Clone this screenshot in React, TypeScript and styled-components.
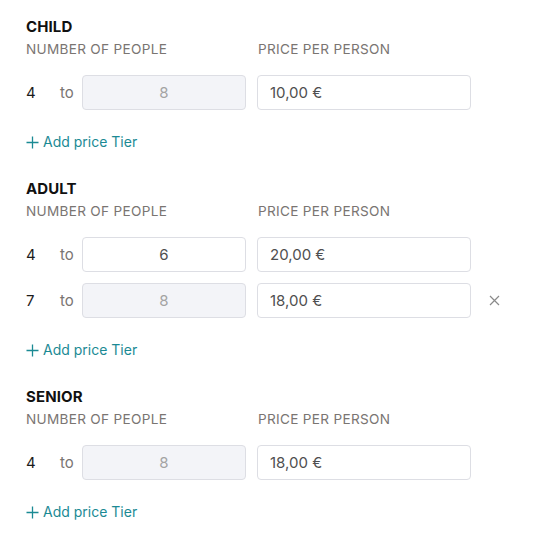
import React from "react";
import styled, { createGlobalStyle } from "styled-components";

const Global = createGlobalStyle`
  html, body { margin: 0; padding: 0; background: #ffffff; }
  body { font-family: Inter, "Open Sans", sans-serif; -webkit-font-smoothing: antialiased; }
`;

const Page = styled.div`
  padding: 17px 0 0 26px;
  display: flex;
  flex-direction: column;
  gap: 29px;
`;

const Section = styled.section`
  display: flex;
  flex-direction: column;
`;

const Title = styled.h2`
  margin: 0;
  font-size: 15px;
  line-height: 20px;
  font-weight: 700;
  color: #111111;
  letter-spacing: 0.1px;
`;

const LabelRow = styled.div`
  display: grid;
  grid-template-columns: 232px auto;
  margin-top: 2px;
`;

const Label = styled.span`
  font-size: 13.6px;
  line-height: 20px;
  color: #7a7572;
  letter-spacing: 0.3px;
`;

const Rows = styled.div`
  display: flex;
  flex-direction: column;
  gap: 11px;
  margin-top: 16px;
`;

const Row = styled.div`
  display: flex;
  align-items: center;
  height: 35px;
`;

const From = styled.span`
  width: 34px;
  font-size: 15px;
  color: #1c1c1c;
`;

const To = styled.span`
  width: 22px;
  font-size: 15px;
  color: #7a7572;
`;

const Field = styled.div<{ $disabled?: boolean; $w: number; $center?: boolean }>`
  box-sizing: border-box;
  width: ${(p) => p.$w}px;
  height: 35px;
  border: 1px solid #dddee4;
  border-radius: 4px;
  background: ${(p) => (p.$disabled ? "#f3f4f8" : "#ffffff")};
  color: ${(p) => (p.$disabled ? "#a3a3a3" : "#4f4f4f")};
  font-size: 15px;
  display: flex;
  align-items: center;
  justify-content: ${(p) => (p.$center ? "center" : "flex-start")};
  padding: 0 12px;
`;

const Gap = styled.span`
  width: 11px;
`;

const Remove = styled.button`
  margin-left: 15px;
  width: 16px;
  height: 16px;
  padding: 0;
  border: none;
  background: none;
  display: flex;
  align-items: center;
  justify-content: center;
  color: #8a8a8a;
  cursor: pointer;
`;

const AddTier = styled.button`
  margin-top: 24px;
  align-self: flex-start;
  padding: 0;
  border: none;
  background: none;
  display: flex;
  align-items: center;
  gap: 4px;
  font-family: inherit;
  font-size: 14px;
  line-height: 16px;
  color: #1b8a94;
  cursor: pointer;
`;

type Tier = { from: number; to: number; price: string; last: boolean };
type Group = { name: string; tiers: Tier[] };

const groups: Group[] = [
  { name: "CHILD", tiers: [{ from: 4, to: 8, price: "10,00 €", last: true }] },
  {
    name: "ADULT",
    tiers: [
      { from: 4, to: 6, price: "20,00 €", last: false },
      { from: 7, to: 8, price: "18,00 €", last: true },
    ],
  },
  { name: "SENIOR", tiers: [{ from: 4, to: 8, price: "18,00 €", last: true }] },
];

const Plus = () => (
  <svg width="13" height="13" viewBox="0 0 13 13" fill="none" stroke="currentColor" strokeWidth="1.3">
    <path d="M6.5 0.5v12M0.5 6.5h12" />
  </svg>
);

const Cross = () => (
  <svg width="11" height="11" viewBox="0 0 11 11" fill="none" stroke="currentColor" strokeWidth="1.2">
    <path d="M1 1l9 9M10 1l-9 9" />
  </svg>
);

export default function App() {
  return (
    <>
      <Global />
      <Page>
        {groups.map((g) => (
          <Section key={g.name}>
            <Title>{g.name}</Title>
            <LabelRow>
              <Label>NUMBER OF PEOPLE</Label>
              <Label>PRICE PER PERSON</Label>
            </LabelRow>
            <Rows>
              {g.tiers.map((t, i) => (
                <Row key={i}>
                  <From>{t.from}</From>
                  <To>to</To>
                  <Field $w={164} $center $disabled={t.last}>
                    {t.to}
                  </Field>
                  <Gap />
                  <Field $w={214}>{t.price}</Field>
                  {g.tiers.length > 1 && t.last && (
                    <Remove aria-label="remove">
                      <Cross />
                    </Remove>
                  )}
                </Row>
              ))}
            </Rows>
            <AddTier>
              <Plus />
              Add price Tier
            </AddTier>
          </Section>
        ))}
      </Page>
    </>
  );
}
